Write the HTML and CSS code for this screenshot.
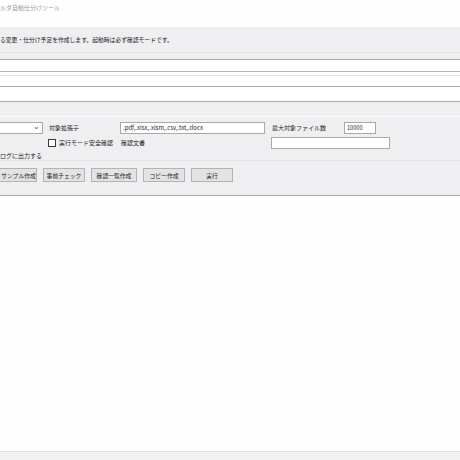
FILE: index.html
```html
<!DOCTYPE html>
<html lang="ja">
<head>
    <meta charset="UTF-8">
    <meta name="viewport" content="width=device-width, initial-scale=1.0">
    <title>フォルダ自動仕分けツール</title>
    <link rel="stylesheet" href="styles.css">
</head>
<body>
    <div class="window">
        <div class="titlebar">ルダ自動仕分けツール</div>
        <div class="notice">る変更・仕分け予定を作成します。起動時は必ず確認モードです。</div>

        <div class="paths">
            <div class="field f1"></div>
            <div class="field f2"></div>
            <div class="field f3"></div>
            <div class="field f4"></div>
        </div>
        <div class="spacer"></div>

        <div class="options">
            <div class="select"><span class="chev">&#8964;</span></div>
            <div class="label ext-label">対象拡張子</div>
            <div class="input ext-input">.pdf,.xlsx,.xlsm,.csv,.txt,.docx</div>
            <div class="label max-label">最大対象ファイル数</div>
            <div class="input max-input">10000</div>

            <div class="check-wrap">
                <span class="checkbox"></span>
                <span class="label">実行モード安全確認</span>
            </div>
            <div class="label confirm-label">確認文書</div>
            <div class="input confirm-input"></div>

            <div class="label log-label">ログに出力する</div>
        </div>

        <div class="actions">
            <button class="btn first">サンプル作成</button>
            <button class="btn">事前チェック</button>
            <button class="btn wide">確認一覧作成</button>
            <button class="btn">コピー作成</button>
            <button class="btn">実行</button>
        </div>

        <div class="output"></div>
        <div class="status"></div>
    </div>
</body>
</html>
```

FILE: styles.css
```css
body {
    margin: 0;
    background-color: #ffffff;
    font-family: "Noto Sans CJK JP", "Noto Sans", sans-serif;
    color: #1e1e1e;
    overflow: hidden;
}
.window {
    width: 460px;
    height: 460px;
    display: flex;
    flex-direction: column;
}
.titlebar {
    height: 27px;
    line-height: 16px;
    font-size: 6px;
    color: #9a9a9a;
    background-color: #fdfefd;
    white-space: nowrap;
}
.notice {
    height: 25px;
    line-height: 26px;
    font-size: 5.8px;
    background-color: #efeef1;
    border-bottom: 1px solid #e2e0e4;
    white-space: nowrap;
}
.paths {
    background-color: #efeef1;
    padding-top: 6px;
}
.field {
    background-color: #ffffff;
}
.f1 {
    height: 11px;
    border-top: 1px solid #acacac;
}
.f2 {
    height: 3px;
    border-top: 1px solid #b6b6b6;
}
.f3 {
    height: 10px;
    border-top: 1px solid #e3e3e3;
}
.f4 {
    height: 14px;
    border-top: 1px solid #a9a9a9;
    border-bottom: 1px solid #a9a9a9;
}
.spacer {
    height: 14px;
    background-color: #f0eff2;
    border-bottom: 1px solid #f9f9fa;
}
.options {
    display: grid;
    grid-template-columns: 48px 72px 151px 73px 1fr;
    grid-template-rows: 12px 12px 11px;
    row-gap: 2px;
    padding-top: 5px;
    height: 38px;
    background-color: #efeef1;
    border-bottom: 1px solid #e3e1e5;
    font-size: 6px;
}
.label {
    line-height: 12px;
    white-space: nowrap;
}
.input {
    background-color: #ffffff;
    border: 1px solid #a9a9a9;
    box-sizing: border-box;
    height: 12px;
    line-height: 10px;
    padding-left: 2px;
    font-size: 6px;
    white-space: nowrap;
    overflow: hidden;
}
.select {
    margin-left: -6px;
    width: 49px;
    height: 12px;
    box-sizing: border-box;
    background-color: #ffffff;
    border: 1px solid #a9a9a9;
    position: relative;
}
.chev {
    position: absolute;
    right: 2px;
    top: -3px;
    font-size: 8px;
    color: #555;
}
.ext-label {
    padding-left: 1px;
}
.ext-input {
    width: 145px;
}
.max-label {
    padding-left: 1px;
}
.max-input {
    width: 32px;
    padding-left: 2px;
    font-size: 5.6px;
}
.check-wrap {
    grid-column: 2;
    display: flex;
    align-items: center;
    gap: 3px;
    margin-top: 2px;
}
.checkbox {
    width: 6px;
    height: 6px;
    border: 1px solid #3a3a3a;
    background-color: #ffffff;
}
.confirm-label {
    padding-left: 1px;
    margin-top: 1px;
}
.confirm-input {
    grid-column: 4 / 6;
    width: 119px;
    margin-top: 1px;
}
.log-label {
    grid-column: 1 / 3;
    line-height: 12px;
}
.actions {
    display: flex;
    gap: 6px;
    height: 27px;
    padding-top: 7px;
    margin-left: -5px;
    background-color: #efeef1;
    border-bottom: 1px solid #acacac;
}
.btn {
    width: 42px;
    height: 14px;
    padding: 0;
    font-family: inherit;
    font-size: 5.8px;
    color: #1e1e1e;
    background-color: #e3e3e3;
    border: 1px solid #b3b3b3;
    white-space: nowrap;
}
.btn.first {
    padding-left: 5px;
}
.btn.wide {
    width: 46px;
}
.output {
    height: 255px;
    background-color: #fefefe;
    border-bottom: 1px solid #dcdcdc;
}
.status {
    flex: 1;
    background-color: #f2f2f2;
}
```
